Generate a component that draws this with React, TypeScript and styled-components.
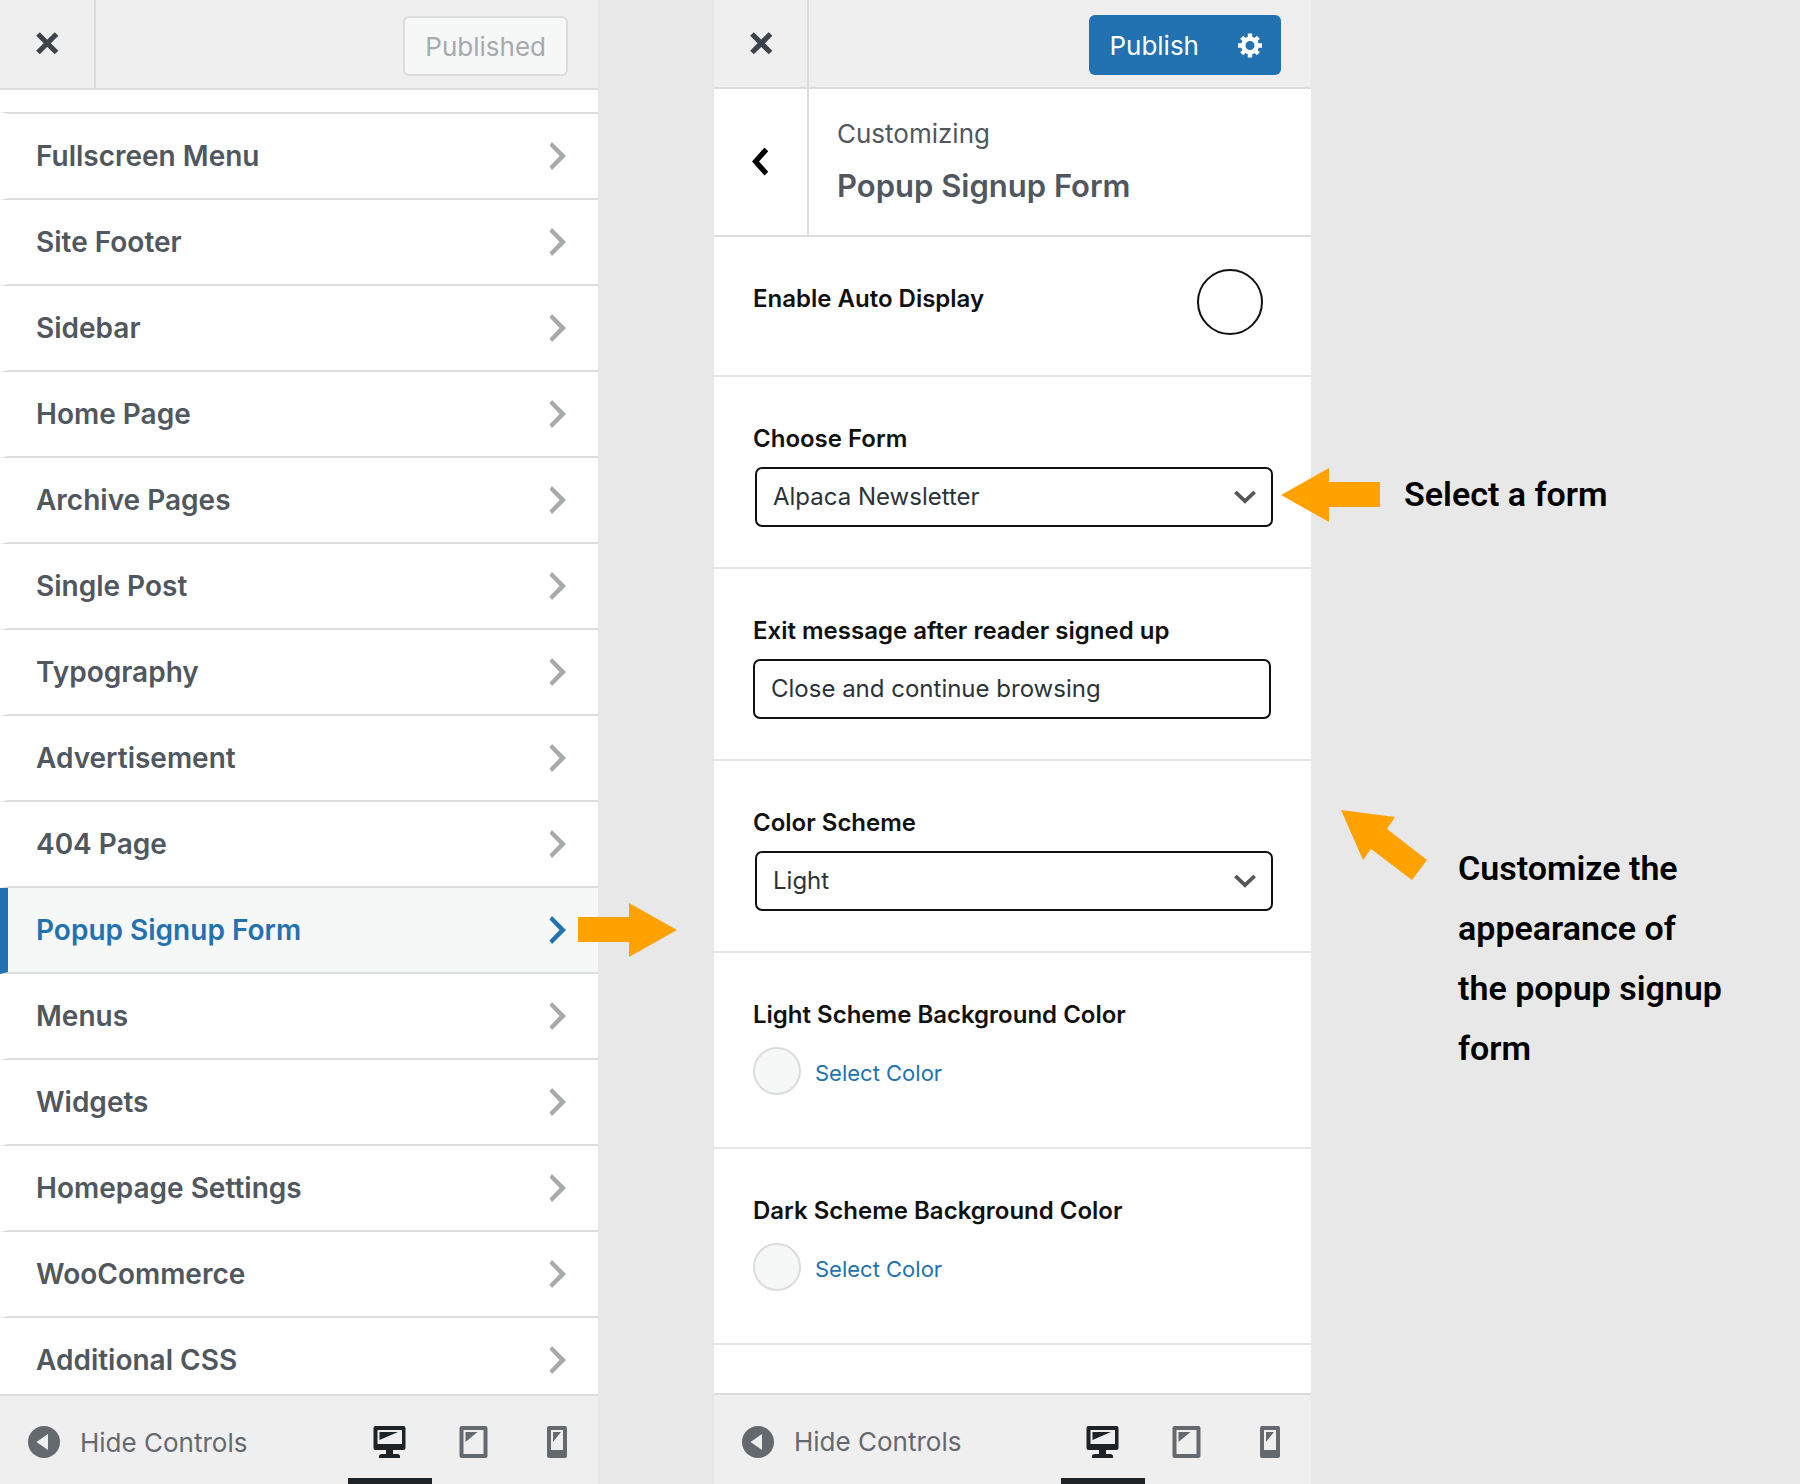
import React from "react";
import styled, { createGlobalStyle, css } from "styled-components";

const font = `Inter, "Noto Sans", sans-serif`;

const GlobalStyle = createGlobalStyle`
  *, *::before, *::after { box-sizing: border-box; }
  body { margin: 0; background: #e8e8e8; font-family: ${font}; }
  button, input, select { font-family: inherit; margin: 0; }
`;

const Page = styled.main`
  display: grid;
  grid-template-columns: minmax(0, 598fr) minmax(0, 116fr) minmax(0, 597fr) minmax(0, 489fr);
  height: 100vh;
  overflow: hidden;
`;

const Panel = styled.section`
  display: flex;
  flex-direction: column;
  min-height: 0;
  background: #fff;
`;

const PanelHeader = styled.header<{ $height: number }>`
  display: flex;
  flex: none;
  align-items: stretch;
  height: ${(p) => p.$height}px;
  background: #efefef;
  border-bottom: 2px solid #dcdcde;
`;

const SquareButton = styled.button<{ $tone: string; $width: number }>`
  display: flex;
  flex: none;
  align-items: center;
  justify-content: center;
  width: ${(p) => p.$width}px;
  padding: 0;
  border: 0;
  border-right: 2px solid #dcdcde;
  background: transparent;
  color: ${(p) => p.$tone};
`;

const HeaderActions = styled.div`
  display: flex;
  flex: 1;
  align-items: flex-start;
  justify-content: flex-end;
  padding: 15px 30px 0 0;
`;

const PublishedButton = styled.button`
  height: 60px;
  margin-top: 1px;
  padding: 2px 20px 0;
  border: 2px solid #dcdcde;
  border-radius: 6px;
  background: #f6f7f7;
  color: #a7aaad;
  font-size: 26px;
  line-height: 54px;
`;

const PublishGroup = styled.div`
  display: flex;
  height: 60px;
  border-radius: 6px;
  background: #2271b1;
`;

const PublishButton = styled.button`
  padding: 2px 0 0 20px;
  border: 0;
  background: transparent;
  color: #fff;
  font-size: 26px;
  line-height: 58px;
`;

const GearButton = styled.button`
  display: flex;
  align-items: center;
  justify-content: center;
  width: 62px;
  margin-left: 20px;
  padding: 0;
  border: 0;
  background: transparent;
  color: #fff;
`;

const MenuList = styled.ul`
  flex: 1;
  min-height: 0;
  margin: 0;
  padding: 22px 0 0;
  overflow: hidden;
  list-style: none;
`;

const MenuLink = styled.a<{ $active: boolean; $first: boolean }>`
  display: flex;
  align-items: center;
  justify-content: space-between;
  height: ${(p) => (p.$first ? 88 : 86)}px;
  padding: 0 32px 0 28px;
  border: 0 solid #dcdcde;
  border-top-width: ${(p) => (p.$first ? 2 : 0)}px;
  border-bottom-width: 2px;
  border-left: 8px solid #fff;
  color: #50575e;
  font-size: 28px;
  font-weight: 600;
  text-decoration: none;
  svg { color: #a7aaad; }
  ${(p) =>
    p.$active &&
    css`
      border-left-color: #2271b1;
      background: #f6f7f7;
      color: #2271b1;
      svg { color: #2271b1; }
    `}
`;

const PanelFooter = styled.footer<{ $height: number }>`
  display: flex;
  flex: none;
  align-items: stretch;
  justify-content: space-between;
  height: ${(p) => p.$height}px;
  padding: 0 0 0 28px;
  border-top: 2px solid #dcdcde;
  background: #efefef;
`;

const HideButton = styled.button`
  display: flex;
  align-items: center;
  gap: 20px;
  padding: 4px 0 0;
  border: 0;
  background: transparent;
  color: #646970;
  font-size: 26px;
`;

const Devices = styled.div`
  display: flex;
`;

const DeviceButton = styled.button<{ $active?: boolean }>`
  display: flex;
  align-items: center;
  justify-content: center;
  width: ${(p) => (p.$active ? 84 : 83)}px;
  padding: 10px 0 0;
  border: 0;
  border-bottom: 6px solid ${(p) => (p.$active ? "#1d2327" : "transparent")};
  background: transparent;
  color: ${(p) => (p.$active ? "#1d2327" : "#646970")};
`;

const TitleBar = styled.div`
  display: flex;
  flex: none;
  height: 148px;
  border-bottom: 2px solid #dcdcde;
`;

const Titles = styled.h1`
  display: flex;
  flex-direction: column;
  margin: 0;
  padding: 26px 0 0 28px;
  color: #50575e;
  font-weight: 400;
`;

const Eyebrow = styled.span`
  font-size: 26px;
  line-height: 38px;
`;

const Title = styled.strong`
  padding-top: 10px;
  font-size: 31px;
  font-weight: 600;
  line-height: 46px;
`;

const Form = styled.form`
  flex: 1;
  min-height: 0;
  overflow: hidden;
`;

const Control = styled.div<{ $height: number }>`
  height: ${(p) => p.$height}px;
  padding: 45px 40px 0 39px;
  border-bottom: 2px solid #e5e5e5;
`;

const ToggleControl = styled.div`
  display: flex;
  justify-content: space-between;
  height: 140px;
  padding: 32px 48px 0 39px;
  border-bottom: 2px solid #e5e5e5;
`;

const labelText = css`
  display: block;
  color: #111;
  font-size: 24px;
  font-weight: 600;
  line-height: 34px;
`;

const Label = styled.label`
  ${labelText}
`;

const ToggleLabel = styled.label`
  ${labelText}
  padding-top: 13px;
`;

const Toggle = styled.input`
  appearance: none;
  width: 66px;
  height: 66px;
  margin: 0;
  border: 2px solid #111;
  border-radius: 50%;
  background: #fff;
`;

const fieldBox = css`
  display: block;
  width: 100%;
  height: 60px;
  border: 2px solid #111;
  border-radius: 7px;
  background: #fff;
  color: #2c3338;
  font-size: 24px;
`;

const TextInput = styled.input`
  ${fieldBox}
  margin-top: 11px;
  padding: 0 16px 2px;
`;

const SelectWrap = styled.div`
  display: grid;
  align-items: center;
  margin: 11px -2px 0 2px;
  svg {
    grid-area: 1 / 1;
    justify-self: end;
    margin-right: 17px;
    color: #555;
    pointer-events: none;
  }
`;

const Select = styled.select`
  ${fieldBox}
  grid-area: 1 / 1;
  appearance: none;
  padding: 0 48px 2px 16px;
`;

const ColorButton = styled.button`
  display: flex;
  align-items: flex-start;
  gap: 14px;
  margin-top: 15px;
  padding: 0;
  border: 0;
  background: transparent;
  color: #2271b1;
  font-size: 22px;
  line-height: 52px;
`;

const Swatch = styled.span`
  width: 48px;
  height: 48px;
  border: 2px solid #dcdcde;
  border-radius: 50%;
  background: #f6f7f7;
`;

const Gutter = styled.div`
  position: relative;
`;

const Notes = styled.aside`
  position: relative;
`;

const Marker = styled.svg<{ $x: number; $y: number }>`
  position: absolute;
  left: ${(p) => p.$x}px;
  top: ${(p) => p.$y}px;
  z-index: 1;
  fill: #ffa200;
`;

const Note = styled.p<{ $x: number; $y: number; $width: number }>`
  position: absolute;
  left: ${(p) => p.$x}px;
  top: ${(p) => p.$y}px;
  width: ${(p) => p.$width}px;
  margin: 0;
  color: #000;
  font-family: Roboto, sans-serif;
  font-size: 34px;
  font-weight: 600;
  line-height: 60px;
`;

const CloseIcon = () => (
  <svg width="24" height="26" viewBox="0 0 24 26" fill="none" stroke="currentColor" strokeWidth="5.2" aria-hidden="true">
    <path d="M3 3 21.500 21.500M21.500 3 3 21.500" />
  </svg>
);

const BackIcon = () => (
  <svg width="20" height="28" viewBox="0 0 20 28" fill="currentColor" aria-hidden="true">
    <path d="M13.500 -.5 17 3v.6L8 13.500 17 23.400v.6L13.500 27.500 1 13.500z" />
  </svg>
);

const ChevronRight = () => (
  <svg width="17" height="28" viewBox="0 0 17 28" fill="currentColor" aria-hidden="true">
    <path d="M3 0 17 14 3 28 .5 24.6 10.6 14 .5 3.4z" />
  </svg>
);

const ChevronDown = () => (
  <svg width="22" height="14" viewBox="0 0 22 14" fill="none" stroke="currentColor" strokeWidth="3.8" aria-hidden="true">
    <path d="M1.4 2 11 11.2 20.6 2" />
  </svg>
);

const GearIcon = () => (
  <svg width="26" height="26" viewBox="0 0 26 26" fill="none" stroke="currentColor" strokeWidth="4.4" aria-hidden="true">
    <circle cx="13" cy="13.500" r="6.700" />
    <path d="M13 5.500v-4M13 21.500v4M5 13.500H1M21 13.500h4M7.500 8 4.700 5.200M18.500 8l2.800-2.800M7.500 19l-2.800 2.800M18.500 19l2.800 2.800" />
  </svg>
);

const CollapseIcon = () => (
  <svg width="32" height="32" viewBox="0 0 32 32" aria-hidden="true">
    <circle cx="16" cy="16" r="16" fill="currentColor" />
    <path d="M8.5 16 20 8v16z" fill="#efefef" />
  </svg>
);

const DesktopIcon = () => (
  <svg width="34" height="32" viewBox="0 0 34 32" aria-hidden="true">
    <path
      fill="currentColor"
      fillRule="evenodd"
      d="M2.5 0h28A2 2 0 0 1 32.500 2v20a2 2 0 0 1-2 2H20v4h4.500a2.500 2.500 0 0 1 2.500 2.500V32H6v-1.500A2.500 2.500 0 0 1 8.500 28H13v-4H2.500a2 2 0 0 1-2-2V2a2 2 0 0 1 2-2zM4.500 4v14h24.500V4zM6.500 6H25L6.500 14z"
    />
  </svg>
);

const TabletIcon = () => (
  <svg width="30" height="32" viewBox="0 0 30 32" aria-hidden="true">
    <path
      fill="currentColor"
      fillRule="evenodd"
      d="M2.500 0h24a2 2 0 0 1 2 2v28a2 2 0 0 1-2 2h-24a2 2 0 0 1-2-2V2a2 2 0 0 1 2-2zM4.500 4v24h20V4zM6.500 6h12L6.500 16z"
    />
  </svg>
);

const PhoneIcon = () => (
  <svg width="20" height="32" viewBox="0 0 20 32" aria-hidden="true">
    <path
      fill="currentColor"
      fillRule="evenodd"
      d="M2 0h16a2 2 0 0 1 2 2v28a2 2 0 0 1-2 2H2a2 2 0 0 1-2-2V2a2 2 0 0 1 2-2zM4 4v20h12V4zM6 6h8L6 16z"
    />
  </svg>
);

const Footer = ({ height }: { height: number }) => (
  <PanelFooter $height={height}>
    <HideButton type="button">
      <CollapseIcon />
      Hide Controls
    </HideButton>
    <Devices>
      <DeviceButton type="button" $active aria-label="Desktop preview">
        <DesktopIcon />
      </DeviceButton>
      <DeviceButton type="button" aria-label="Tablet preview">
        <TabletIcon />
      </DeviceButton>
      <DeviceButton type="button" aria-label="Mobile preview">
        <PhoneIcon />
      </DeviceButton>
    </Devices>
  </PanelFooter>
);

const sections = [
  "Fullscreen Menu",
  "Site Footer",
  "Sidebar",
  "Home Page",
  "Archive Pages",
  "Single Post",
  "Typography",
  "Advertisement",
  "404 Page",
  "Popup Signup Form",
  "Menus",
  "Widgets",
  "Homepage Settings",
  "WooCommerce",
  "Additional CSS",
];

export default function App() {
  return (
    <>
      <GlobalStyle />
      <Page>
        <Panel>
          <PanelHeader $height={90}>
            <SquareButton type="button" $tone="#3c434a" $width={96} aria-label="Close customizer">
              <CloseIcon />
            </SquareButton>
            <HeaderActions>
              <PublishedButton type="button">Published</PublishedButton>
            </HeaderActions>
          </PanelHeader>
          <MenuList>
            {sections.map((name, index) => (
              <li key={name}>
                <MenuLink href="#" $first={index === 0} $active={name === "Popup Signup Form"}>
                  {name}
                  <ChevronRight />
                </MenuLink>
              </li>
            ))}
          </MenuList>
          <Footer height={90} />
        </Panel>

        <Gutter>
          <Marker $x={-20} $y={903} width="99" height="54" viewBox="0 0 99 54" aria-hidden="true">
            <path d="M0 14h51V0l48 27-48 27V39H0z" />
          </Marker>
        </Gutter>

        <Panel>
          <PanelHeader $height={89}>
            <SquareButton type="button" $tone="#3c434a" $width={95} aria-label="Close section">
              <CloseIcon />
            </SquareButton>
            <HeaderActions>
              <PublishGroup>
                <PublishButton type="button">Publish</PublishButton>
                <GearButton type="button" aria-label="Publish settings">
                  <GearIcon />
                </GearButton>
              </PublishGroup>
            </HeaderActions>
          </PanelHeader>
          <TitleBar>
            <SquareButton type="button" $tone="#000" $width={95} aria-label="Back">
              <BackIcon />
            </SquareButton>
            <Titles>
              <Eyebrow>Customizing</Eyebrow>
              <Title>Popup Signup Form</Title>
            </Titles>
          </TitleBar>
          <Form>
            <ToggleControl>
              <ToggleLabel htmlFor="auto">Enable Auto Display</ToggleLabel>
              <Toggle id="auto" type="checkbox" />
            </ToggleControl>
            <Control $height={192}>
              <Label htmlFor="form">Choose Form</Label>
              <SelectWrap>
                <Select id="form" defaultValue="Alpaca Newsletter">
                  <option>Alpaca Newsletter</option>
                </Select>
                <ChevronDown />
              </SelectWrap>
            </Control>
            <Control $height={192}>
              <Label htmlFor="exit">Exit message after reader signed up</Label>
              <TextInput id="exit" type="text" defaultValue="Close and continue browsing" />
            </Control>
            <Control $height={192}>
              <Label htmlFor="scheme">Color Scheme</Label>
              <SelectWrap>
                <Select id="scheme" defaultValue="Light">
                  <option>Light</option>
                </Select>
                <ChevronDown />
              </SelectWrap>
            </Control>
            <Control $height={196}>
              <Label htmlFor="light-color">Light Scheme Background Color</Label>
              <ColorButton id="light-color" type="button">
                <Swatch />
                Select Color
              </ColorButton>
            </Control>
            <Control $height={196}>
              <Label htmlFor="dark-color">Dark Scheme Background Color</Label>
              <ColorButton id="dark-color" type="button">
                <Swatch />
                Select Color
              </ColorButton>
            </Control>
          </Form>
          <Footer height={91} />
        </Panel>

        <Notes>
          <Marker $x={-30} $y={468} width="99" height="54" viewBox="0 0 99 54" aria-hidden="true">
            <path d="M99 14H48V0L0 27l48 27V39h51z" />
          </Marker>
          <Note $x={93} $y={464} $width={300}>
            Select a form
          </Note>
          <Marker $x={30} $y={810} width="86" height="70" viewBox="0 0 86 70" aria-hidden="true">
            <path d="M0 0 54 7 46 19 86 50 71 70 30 39 22 50z" />
          </Marker>
          <Note $x={147} $y={838} $width={270}>
            Customize the appearance of the popup signup form
          </Note>
        </Notes>
      </Page>
    </>
  );
}
